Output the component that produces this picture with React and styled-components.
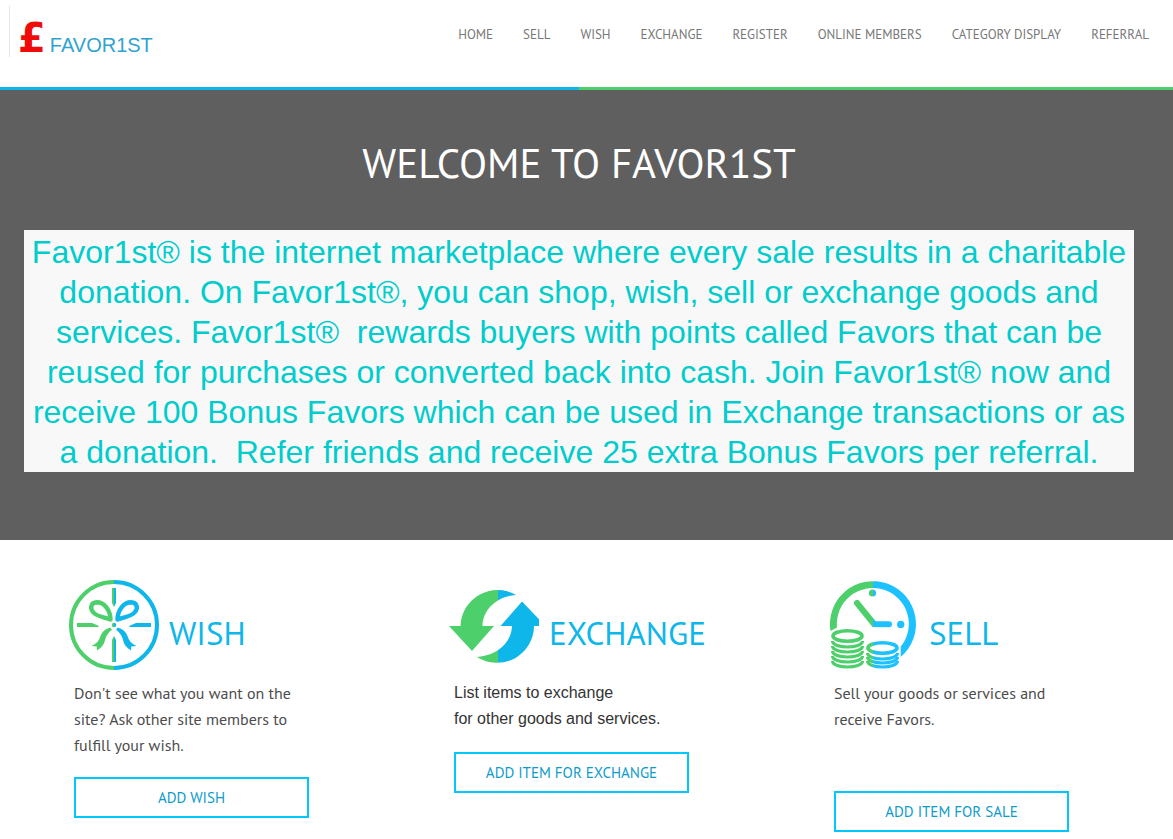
import React from 'react';
import styled, { createGlobalStyle } from 'styled-components';

const GlobalStyle = createGlobalStyle`
  :root {
    --color-blue: #0eb6e9;
    --color-green: #4dcf6b;
    --color-hero: #5f5f5f;
    --font-main: 'PT Sans', 'Noto Sans', sans-serif;
    --font-arial: 'Liberation Sans', Arial, sans-serif;
  }

  * {
    box-sizing: border-box;
  }

  body {
    margin: 0;
    background-color: #fff;
    font-family: var(--font-main);
  }
`;

const Header = styled.header`
  display: flex;
  justify-content: space-between;
  align-items: flex-start;
  height: 87px;
  padding: 6px 24px 0 9px;
`;

const Logo = styled.a`
  display: flex;
  align-items: baseline;
  gap: 4px;
  height: 51px;
  padding-left: 8px;
  border-left: 1px solid #e4e4e4;
  color: #2fa3d0;
  font-family: var(--font-arial);
  font-size: 20px;
  line-height: 64px;
  text-decoration: none;
`;

const Pound = styled.span`
  color: #f00b0b;
  font-family: 'DejaVu Sans', sans-serif;
  font-size: 40px;
  font-weight: bold;
`;

const Nav = styled.nav`
  display: flex;
  gap: 30px;
  padding-top: 19px;
`;

const NavLink = styled.a`
  color: #777;
  font-size: 13px;
  line-height: 20px;
  white-space: nowrap;
  text-decoration: none;
`;

const Stripe = styled.div`
  height: 3px;
  background: linear-gradient(
    to right,
    var(--color-blue) calc(50% - 7px),
    var(--color-green) calc(50% - 7px)
  );
`;

const Hero = styled.section`
  padding: 44px 39px 68px 24px;
  background-color: var(--color-hero);
  text-align: center;
`;

const Title = styled.h1`
  margin: 0 0 38px;
  color: #fff;
  font-size: 41px;
  font-weight: 400;
  line-height: 58px;
`;

const Intro = styled.p`
  margin: 0;
  padding-top: 2px;
  background-color: #f8f8f8;
  color: #00cccc;
  font-family: var(--font-arial);
  font-size: 32px;
  line-height: 40px;
`;

const Features = styled.main`
  display: grid;
  grid-template-columns: repeat(3, 1fr);
  align-items: start;
  max-width: 1164px;
  padding: 40px 15px 0 9px;
`;

const Feature = styled.section`
  padding-left: 60px;
`;

const FeatureHead = styled.div`
  display: flex;
  align-items: flex-end;
  gap: 10px;
`;

const Icon = styled.svg`
  flex: none;
  width: 90px;
  height: 90px;
`;

const FeatureTitle = styled.h2`
  margin: 0 0 17px;
  color: var(--color-blue);
  font-size: 33px;
  font-weight: 400;
  line-height: 40px;
`;

const FeatureBody = styled.div`
  width: 240px;
  padding: 10px 0 0 5px;
`;

const Text = styled.p`
  min-height: ${props => props.$lines * 26}px;
  margin: 0 0 ${props => props.$space}px;
  color: ${props => (props.$arial ? '#333' : '#4c4c4c')};
  font-family: ${props => (props.$arial ? 'var(--font-arial)' : 'inherit')};
  font-size: 16px;
  line-height: 26px;
  white-space: pre-line;
`;

const Button = styled.button`
  display: block;
  width: 100%;
  height: 41px;
  padding: 0;
  border: 2px solid #00c8ff;
  background-color: #fff;
  color: #0d9bcb;
  font-family: inherit;
  font-size: 15px;
`;

const links = [
  'HOME',
  'SELL',
  'WISH',
  'EXCHANGE',
  'REGISTER',
  'ONLINE MEMBERS',
  'CATEGORY DISPLAY',
  'REFERRAL',
];

function TwoTone({ id, split, right = '#0eb6e9' }) {
  return (
    <linearGradient id={id} gradientUnits="userSpaceOnUse" x1="0" x2="90" y1="0" y2="0">
      <stop offset={split / 90} stopColor="#4dcf6b" />
      <stop offset={split / 90} stopColor={right} />
    </linearGradient>
  );
}

function WishIcon() {
  return (
    <Icon viewBox="0 0 90 90" aria-hidden="true">
      <defs>
        <TwoTone id="wish" split={45} />
      </defs>
      <circle cx="45" cy="45" r="43" fill="none" stroke="url(#wish)" strokeWidth="4" />
      <g fill="url(#wish)">
        <path d="M43 8h4v15l-2 4-2-4z" />
        <path d="M43 82h4V60l-2-4-2 4z" />
        <path d="M8 43h15l7 3-1 1H8z" />
        <path d="M82 43H67l-7 3 1 1h21z" />
        <circle cx="45" cy="45" r="2.2" />
        <path d="M41 47.5C36 49 33 52 31.500 56C30 61 27 64 22.500 66L27.700 66.500L28 70.500C32 68 35 65 36 60C37 55.500 39 53 43 49.700Z" />
        <path d="M49 47.5C54 49 57 52 58.500 56C60 61 63 64 67.500 66L62.300 66.500L62 70.500C58 68 55 65 54 60C53 55.500 51 53 47 49.700Z" />
      </g>
      <g fill="none" stroke="url(#wish)" strokeWidth="4.4" strokeLinejoin="round">
        <path d="M41.5 39.500C41.500 30 35 22.300 28 22.300C22 22.600 20.600 28 24 32C28 37 35 37 41.500 39.500Z" />
        <path d="M48.5 39.500C48.500 30 55 22.300 62 22.300C68 22.600 69.400 28 66 32C62 37 55 37 48.500 39.500Z" />
      </g>
    </Icon>
  );
}

function ExchangeIcon() {
  return (
    <Icon viewBox="0 0 90 90" aria-hidden="true">
      <defs>
        <TwoTone id="exchange" split={49} />
      </defs>
      <g fill="url(#exchange)">
        <path d="M0 46L23 71L45 46H33.5C34 28 50 16 67 15A37 37 0 0 0 11.5 46Z" />
        <path d="M96.5 46L73 21.5L51.5 46H63C62.5 64 46 76 28 77A37 37 0 0 0 85 46Z" />
      </g>
    </Icon>
  );
}

function SellIcon() {
  return (
    <Icon viewBox="0 0 90 90" aria-hidden="true">
      <defs>
        <TwoTone id="sell" split={44} right="#1ec1ff" />
      </defs>
      <g fill="url(#sell)">
        <path d="M1.5 51A43 43 0 1 1 71.7 77V66.7A36 36 0 1 0 8 47.5Z" />
        <circle cx="43.5" cy="13" r="3.6" />
        <circle cx="71.7" cy="44.5" r="3.7" />
      </g>
      <g fill="none" stroke="url(#sell)">
        <path d="M28 23L45 44L60 44.2" strokeWidth="6" strokeLinecap="round" />
        <g strokeWidth="3.6">
          <ellipse cx="18.5" cy="56" rx="14.5" ry="5.3" />
          <ellipse cx="53.5" cy="68" rx="14.5" ry="5.3" />
        </g>
        <g strokeWidth="3.2">
          {[61, 66, 71, 76, 81].map(y => (
            <path key={y} d={`M3.5 ${y}c0 8 30 8 30 0`} />
          ))}
          {[73, 77, 81].map(y => (
            <path key={y} d={`M38.5 ${y}c0 8 30 8 30 0`} />
          ))}
        </g>
      </g>
    </Icon>
  );
}

const features = [
  {
    title: 'WISH',
    icon: WishIcon,
    text: "Don't see what you want on the\nsite? Ask other site members to\nfulfill your wish.",
    lines: 3,
    space: 19,
    action: 'ADD WISH',
  },
  {
    title: 'EXCHANGE',
    icon: ExchangeIcon,
    text: 'List items to exchange\nfor other goods and services.',
    lines: 2,
    space: 20,
    arial: true,
    action: 'ADD ITEM FOR EXCHANGE',
  },
  {
    title: 'SELL',
    icon: SellIcon,
    text: 'Sell your goods or services and\nreceive Favors.',
    lines: 2,
    space: 59,
    action: 'ADD ITEM FOR SALE',
  },
];

function App() {
  return (
    <>
      <GlobalStyle />
      <Header>
        <Logo href="#">
          <Pound>£</Pound>
          <span>FAVOR1ST</span>
        </Logo>
        <Nav>
          {links.map(link => (
            <NavLink key={link} href="#">
              {link}
            </NavLink>
          ))}
        </Nav>
      </Header>
      <Stripe />
      <Hero>
        <Title>WELCOME TO FAVOR1ST</Title>
        <Intro>
          Favor1st® is the internet marketplace where every sale results in a charitable donation. On
          Favor1st®, you can shop, wish, sell or exchange goods and services. Favor1st®&nbsp; rewards
          buyers with points called Favors that can be reused for purchases or converted back into
          cash. Join Favor1st® now and receive 100 Bonus Favors which can be used in Exchange
          transactions or as a donation.&nbsp; Refer friends and receive 25 extra Bonus Favors per
          referral.
        </Intro>
      </Hero>
      <Features>
        {features.map(({ title, icon: FeatureIcon, text, lines, space, arial, action }) => (
          <Feature key={title}>
            <FeatureHead>
              <FeatureIcon />
              <FeatureTitle>{title}</FeatureTitle>
            </FeatureHead>
            <FeatureBody>
              <Text $lines={lines} $space={space} $arial={arial}>
                {text}
              </Text>
              <Button type="button">{action}</Button>
            </FeatureBody>
          </Feature>
        ))}
      </Features>
    </>
  );
}

export default App;
